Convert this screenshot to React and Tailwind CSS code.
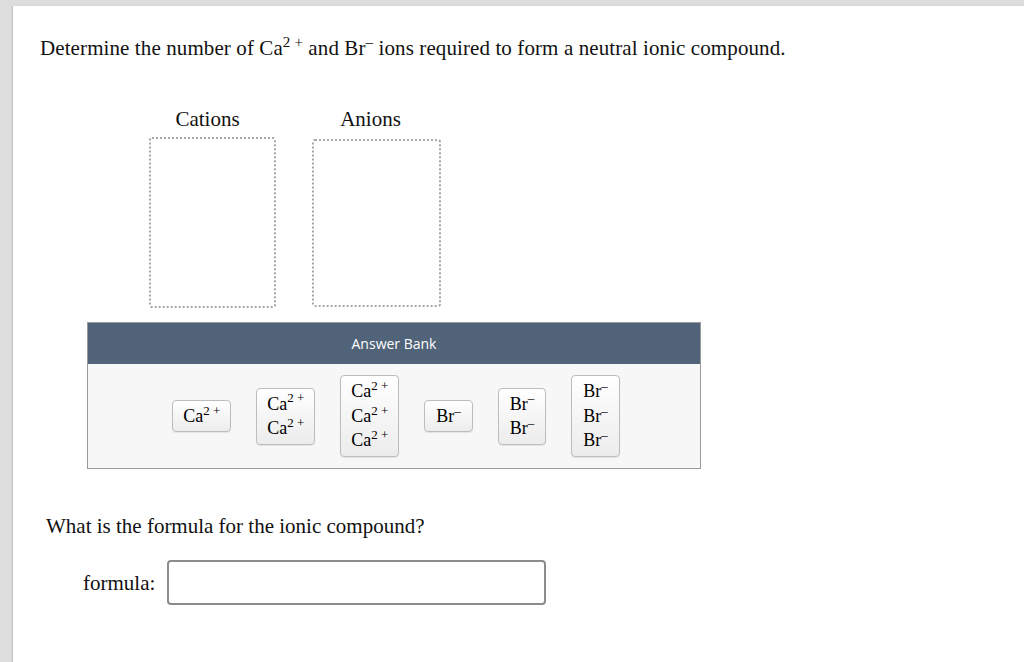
import React from "react";

const serif = "font-['Liberation_Serif','Times_New_Roman',serif]";

function Ca() {
  return (
    <span>
      Ca<sup className="text-[0.72em] -top-[0.55em]">2 +</sup>
    </span>
  );
}

function Br() {
  return (
    <span>
      Br<sup className="text-[0.72em] -top-[0.55em]">–</sup>
    </span>
  );
}

function Chip({ kind, n }) {
  const rows = Array.from({ length: n });
  return (
    <div
      className={`flex flex-col items-center rounded-[4px] border border-[#bdbdbd] bg-gradient-to-b from-white to-[#ececec] py-[3px] text-[18px] leading-[24.5px] text-black shadow-[0_1px_1px_rgba(0,0,0,0.08)] ${
        kind === "ca" ? "px-[10px]" : "px-[11px]"
      }`}
    >
      {rows.map((_, i) => (
        <div key={i}>{kind === "ca" ? <Ca /> : <Br />}</div>
      ))}
    </div>
  );
}

export default function App() {
  return (
    <div className={`min-h-[662px] w-full bg-[#dddddd] pl-[13px] pt-[6px] ${serif}`}>
      <div className="min-h-[656px] bg-white shadow-[-1px_0_1px_rgba(0,0,0,0.12)]">
        {/* Question */}
        <p className="pl-[27px] pt-[30px] text-[21px] leading-[24px] tracking-[0.1px] text-[#111]">
          Determine the number of <Ca /> and <Br /> ions required to form a neutral ionic compound.
        </p>

        {/* Drop zones */}
        <div className="mt-[47px] flex gap-[36px] pl-[136px]">
          <div className="flex w-[127px] flex-col items-center">
            <div className="mr-[10px] text-[21px] leading-[24px] text-[#111]">Cations</div>
            <div className="mt-[6px] h-[171px] w-[127px] rounded-[3px] border-2 border-dotted border-[#a9a9a9]" />
          </div>
          <div className="flex w-[129px] flex-col items-center">
            <div className="mr-[12px] text-[21px] leading-[24px] text-[#111]">Anions</div>
            <div className="mt-[8px] h-[168px] w-[129px] rounded-[3px] border-2 border-dotted border-[#a9a9a9]" />
          </div>
        </div>

        {/* Answer bank */}
        <div className="ml-[74px] mt-[14px] w-[614px] border border-[#9a9a9a]">
          <div className="flex h-[41px] items-center justify-center bg-[#506379] font-['Open_Sans','Noto_Sans',sans-serif] text-[14px] text-white">
            Answer Bank
          </div>
          <div className="flex h-[104px] items-center justify-center gap-[25px] bg-[#f7f7f7] pl-[4px]">
            <Chip kind="ca" n={1} />
            <Chip kind="ca" n={2} />
            <Chip kind="ca" n={3} />
            <Chip kind="br" n={1} />
            <Chip kind="br" n={2} />
            <Chip kind="br" n={3} />
          </div>
        </div>

        {/* Formula */}
        <p className="mt-[45px] pl-[33px] text-[21px] leading-[24px] text-[#111]">
          What is the formula for the ionic compound?
        </p>
        <div className="mt-[22px] flex items-center gap-[12px] pl-[70px]">
          <label className="text-[21px] leading-[24px] text-[#111]">formula:</label>
          <input
            type="text"
            className="h-[45px] w-[379px] rounded-[4px] border-2 border-[#8c8c8c] bg-white outline-none"
          />
        </div>
      </div>
    </div>
  );
}
